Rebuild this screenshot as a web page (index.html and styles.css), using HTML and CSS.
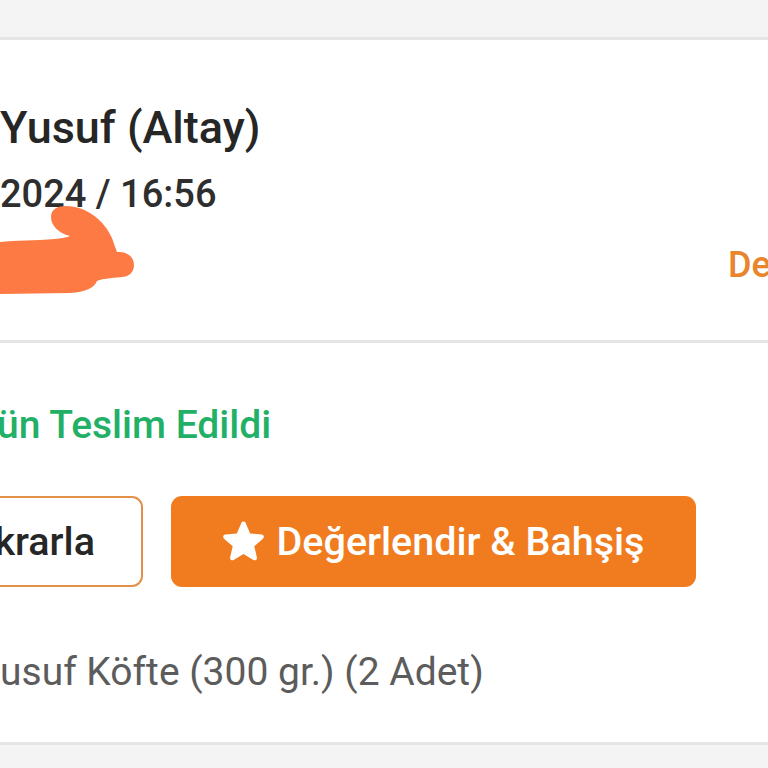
FILE: index.html
```html
<!DOCTYPE html>
<html lang="tr">
<head>
<meta charset="utf-8">
<link rel="stylesheet" href="styles.css">
</head>
<body>
<div class="gap-top"></div>
<div class="card">
  <div class="header">
    <div class="name">Yusuf (Altay)</div>
    <div class="date">2024 / 16:56</div>
    <div class="row3">
      <svg class="blob" width="135" height="90" viewBox="0 205 135 90">
        <path d="M0 242 C15 240 35 241 55 239 C63 238 68 237 70 236 C58 233 51 225 51 217 C51 209 58 206 66 206 C86 206 104 220 112 238 C114 244 116 249 117 252 C127 251 134 257 134 265 C134 273 128 277 122 277 C110 278 101 279 97 281 C94 288 86 292 70 293 L0 294 Z" fill="#fd7a44"/>
      </svg>
      <span class="link">Detaylar</span>
    </div>
  </div>
  <div class="order">
    <div class="status">ün Teslim Edildi</div>
    <div class="buttons">
      <button class="btn btn-outline">Tekrarla</button>
      <button class="btn btn-fill">
        <svg class="star" width="57" height="57" viewBox="0 0 24 24"><path d="M12 17.27l4.15 2.51c.76.46 1.69-.22 1.49-1.08l-1.1-4.72 3.670-3.18c.67-.58.31-1.68-.57-1.75l-4.83-.41-1.89-4.46c-.34-.81-1.49-.81-1.83 0L9.19 8.63l-4.83.41c-.88.07-1.24 1.17-.57 1.75l3.67 3.18-1.1 4.72c-.2.86.73 1.54 1.49 1.08l4.15-2.5z" fill="#fff"/></svg>
        <span>Değerlendir &amp; Bahşiş</span>
      </button>
    </div>
    <div class="item">usuf Köfte (300 gr.) (2 Adet)</div>
  </div>
</div>
</body>
</html>
```
FILE: styles.css
```css
html, body {
  margin: 0;
  padding: 0;
}
body {
  width: 768px;
  height: 768px;
  overflow: hidden;
  background: #f4f4f4;
  font-family: Roboto, "Noto Sans", sans-serif;
}
.gap-top {
  height: 37px;
}
.card {
  background: #ffffff;
  border-top: 3px solid #e5e5e5;
  border-bottom: 3px solid #e5e5e5;
}
.header {
  padding: 62px 0 51px 0;
}
.name {
  font-size: 45px;
  line-height: 52px;
  font-weight: 500;
  color: #262626;
}
.date {
  margin-top: 16px;
  font-size: 38px;
  line-height: 48px;
  font-weight: 500;
  color: #2e2e2e;
}
.row3 {
  margin-top: 23px;
  height: 48px;
  display: flex;
  align-items: center;
  white-space: nowrap;
}
.blob {
  flex: none;
  margin-top: -30px;
}
.link {
  margin-left: 593px;
  font-size: 36px;
  line-height: 48px;
  font-weight: 500;
  color: #e8852d;
}
.order {
  border-top: 3px solid #e5e5e5;
  padding: 58px 0 46px 0;
}
.status {
  font-size: 39px;
  line-height: 48px;
  font-weight: 500;
  color: #22b067;
  text-indent: -3px;
}
.buttons {
  margin-top: 47px;
  display: flex;
  gap: 28px;
}
.btn {
  height: 91px;
  box-sizing: border-box;
  border-radius: 11px;
  font-family: Roboto, "Noto Sans", sans-serif;
  font-size: 39.5px;
  font-weight: 500;
  display: flex;
  align-items: center;
  justify-content: center;
  padding: 0;
  white-space: nowrap;
}
.btn-outline {
  margin-left: -97px;
  width: 240px;
  background: #ffffff;
  border: 2px solid #e3914a;
  color: #262626;
}
.btn-fill {
  width: 525px;
  background: #f07c1f;
  border: none;
  color: #ffffff;
  gap: 5px;
  padding-right: 8px;
}
.star {
  flex: none;
}
.item {
  margin-top: 61px;
  font-size: 39px;
  line-height: 48px;
  color: #5c5c5c;
}
```
